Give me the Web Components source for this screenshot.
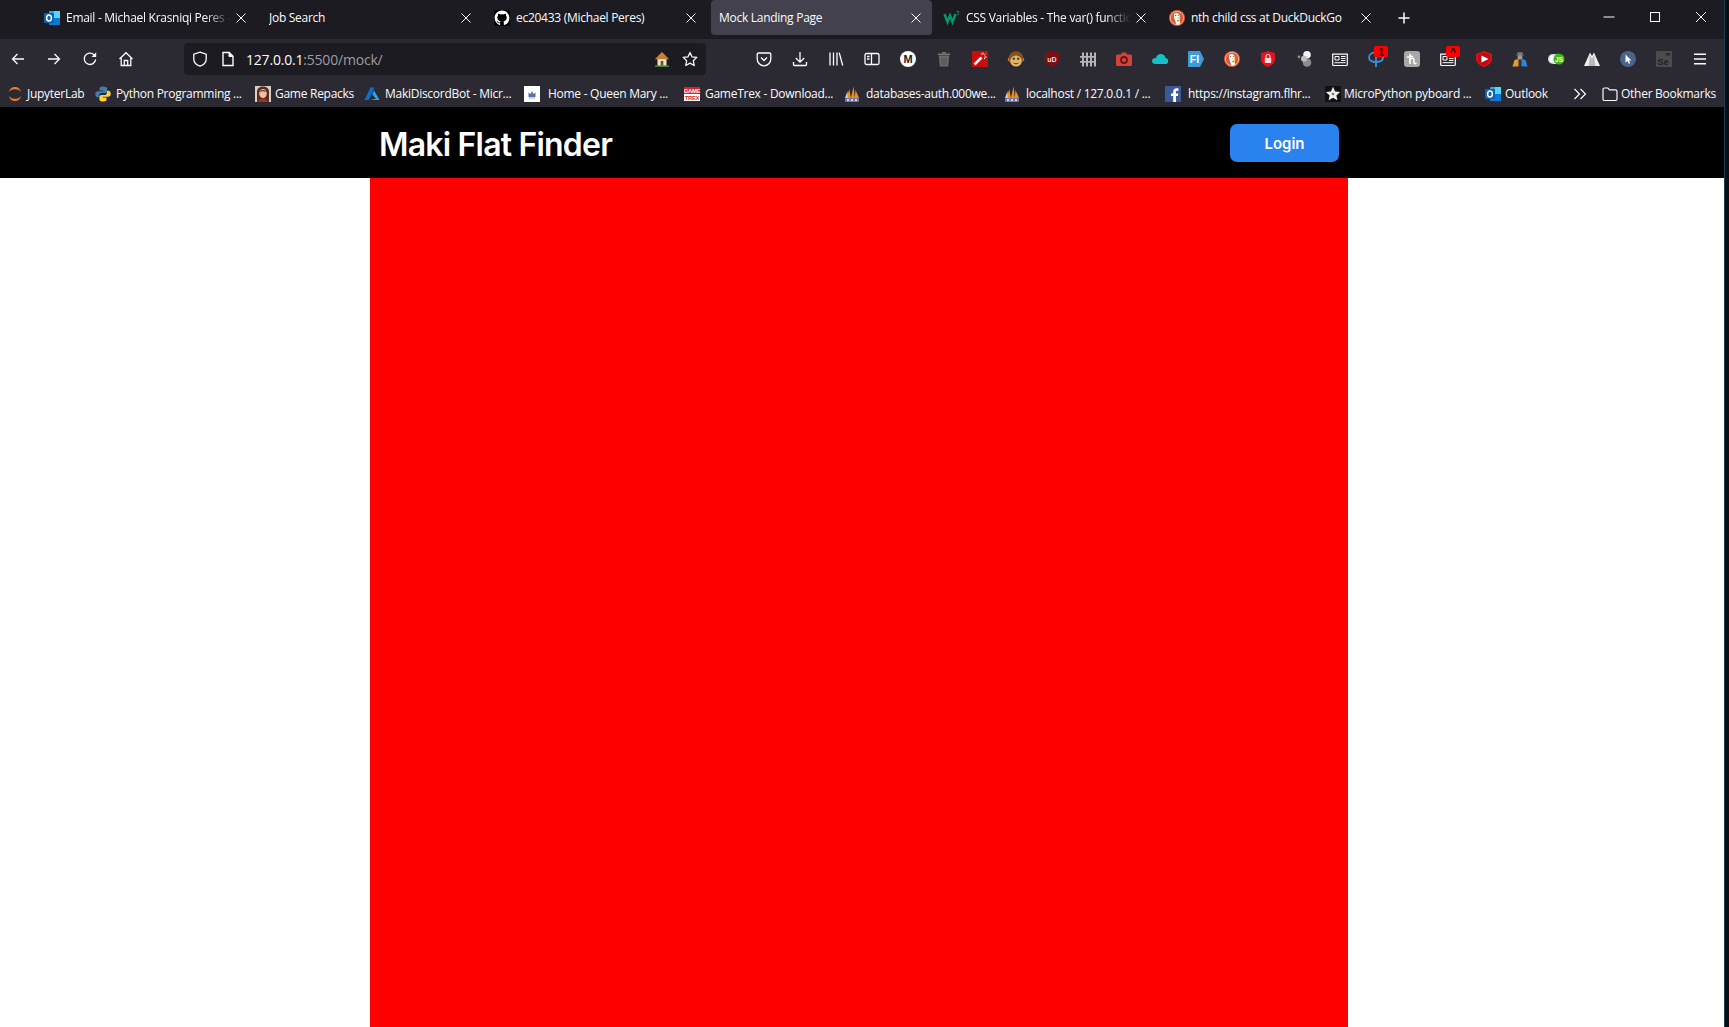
<!DOCTYPE html>
<html>
<head>
<meta charset="utf-8" />
<title>Mock Landing Page</title>
<style>
    html, body { margin: 0; height: 100%; overflow: hidden; background: #0a0e13; }
    body { font-family: "Open Sans", "Liberation Sans", sans-serif; }
</style>
</head>
<body>
<x-desktop>
    <x-strip>
        <x-tab icon="outlook" fade>Email - Michael Krasniqi Peres -</x-tab>
        <x-tab>Job Search</x-tab>
        <x-tab icon="github">ec20433 (Michael Peres)</x-tab>
        <x-tab active>Mock Landing Page</x-tab>
        <x-tab icon="w3" fade>CSS Variables - The var() function</x-tab>
        <x-tab icon="ddg">nth child css at DuckDuckGo</x-tab>
    </x-strip>
    <x-toolbar>
        <x-icon slot="nav" name="back" btn></x-icon>
        <x-icon slot="nav" name="forward" btn></x-icon>
        <x-icon slot="nav" name="reload" btn></x-icon>
        <x-icon slot="nav" name="home" btn></x-icon>
        <x-icon slot="tools" name="pocket" btn></x-icon>
        <x-icon slot="tools" name="download" btn></x-icon>
        <x-icon slot="tools" name="library" btn></x-icon>
        <x-icon slot="tools" name="sidebar" btn></x-icon>
        <x-icon slot="tools" name="mcircle" btn></x-icon>
        <x-icon slot="tools" name="trash" btn></x-icon>
        <x-icon slot="tools" name="wand" btn></x-icon>
        <x-icon slot="tools" name="monkey" btn></x-icon>
        <x-icon slot="tools" name="ublock" btn></x-icon>
        <x-icon slot="tools" name="fence" btn></x-icon>
        <x-icon slot="tools" name="camera" btn></x-icon>
        <x-icon slot="tools" name="cloud" btn></x-icon>
        <x-icon slot="tools" name="fi" btn></x-icon>
        <x-icon slot="tools" name="ddg" btn></x-icon>
        <x-icon slot="tools" name="lock" btn></x-icon>
        <x-icon slot="tools" name="balls" btn></x-icon>
        <x-icon slot="tools" name="news" btn></x-icon>
        <x-icon slot="tools" name="phi" btn badge="1"></x-icon>
        <x-icon slot="tools" name="hsquare" btn></x-icon>
        <x-icon slot="tools" name="news" btn badge="^"></x-icon>
        <x-icon slot="tools" name="yt" btn></x-icon>
        <x-icon slot="tools" name="spy" btn></x-icon>
        <x-icon slot="tools" name="js" btn></x-icon>
        <x-icon slot="tools" name="mountain" btn></x-icon>
        <x-icon slot="tools" name="cursor" btn></x-icon>
        <x-icon slot="tools" name="selenium" btn></x-icon>
        <x-icon slot="tools" name="menu" btn></x-icon>
    </x-toolbar>
    <x-bookmarks>
        <x-bookmark w="88" icon="jupyter" gap="4">JupyterLab</x-bookmark>
        <x-bookmark w="160" icon="python">Python Programming ...</x-bookmark>
        <x-bookmark w="109" icon="photo" gap="4">Game Repacks</x-bookmark>
        <x-bookmark w="160" icon="azure">MakiDiscordBot - Micr...</x-bookmark>
        <x-bookmark w="160" icon="qm" gap="8">Home - Queen Mary ...</x-bookmark>
        <x-bookmark w="160" icon="gametrex">GameTrex - Download...</x-bookmark>
        <x-bookmark w="160" icon="pma" gap="6">databases-auth.000we...</x-bookmark>
        <x-bookmark w="161" icon="pma" gap="6">localhost / 127.0.0.1 / ...</x-bookmark>
        <x-bookmark w="160" icon="fb" gap="7">https://instagram.flhr...</x-bookmark>
        <x-bookmark w="160" icon="micropython" gap="3">MicroPython pyboard ...</x-bookmark>
        <x-bookmark w="87" icon="outlook" gap="4">Outlook</x-bookmark>
        <x-icon name="chevrons"></x-icon>
        <x-bookmark w="114" icon="folder" gap="3" style="margin-left:14px">Other Bookmarks</x-bookmark>
    </x-bookmarks>
    <mock-page>
        <span slot="brand">Maki Flat Finder</span>
        <span slot="action">Login</span>
    </mock-page>
</x-desktop>

<script>
const ICONS = {
    back: '<path d="M14 8H2.500M7.500 3L2.500 8l5 5" fill="none" stroke="#fbfbfe" stroke-width="1.300"/>',
    forward: '<path d="M2 8h11.500M8.500 3l5 5-5 5" fill="none" stroke="#fbfbfe" stroke-width="1.300"/>',
    reload: '<path d="M13.600 8.400A5.700 5.700 0 1 1 11.900 3.700l1.700 1.600" fill="none" stroke="#fbfbfe" stroke-width="1.300"/><path d="M14.200 1.200v4.700H9.600z" fill="#fbfbfe"/>',
    home: '<path d="M1.500 8L8 1.700 14.500 8M3.200 6.600v7.900h9.600V6.600M6.300 14.500V9.500h3.400v5" fill="none" stroke="#fbfbfe" stroke-width="1.300"/>',
    shield: '<path d="M8 1.200L14.200 3.200V8C14.200 11.600 11.400 14 8 15.200 4.600 14 1.800 11.600 1.800 8V3.200Z" fill="none" stroke="#fbfbfe" stroke-width="1.300"/>',
    page: '<path d="M3 1.500h6.200L13 5.300v9.200H3z" fill="none" stroke="#fbfbfe" stroke-width="1.400"/><path d="M9 1.500V5.500H13" fill="#fbfbfe" stroke="#fbfbfe"/>',
    house: '<path d="M1 14.500h14v1.200H1z" fill="#5aa63a"/><path d="M3.500 7.500h9v7h-9z" fill="#eee3c8"/><path d="M8 1L.8 8.200h14.400z" fill="#c9822e"/><path d="M6.700 10h2.600v4.500H6.700z" fill="#7a4a1e"/>',
    star: '<path d="M8 1.400l2 4.400 4.800.6-3.500 3.300.9 4.800L8 12.100l-4.200 2.400.9-4.800L1.200 6.400 6 5.800z" fill="none" stroke="#fbfbfe" stroke-width="1.300" stroke-linejoin="round"/>',
    pocket: '<path d="M2.500 2h11c.8 0 1.300.5 1.300 1.300V8A6.800 6.800 0 0 1 1.200 8V3.300C1.200 2.500 1.700 2 2.500 2z" fill="none" stroke="#fbfbfe" stroke-width="1.300"/><path d="M5 6.500l3 3 3-3" fill="none" stroke="#fbfbfe" stroke-width="1.300"/>',
    download: '<path d="M8 1v10M3.800 7L8 11.200 12.200 7M1.500 11v2.500c0 .6.4 1 1 1h11c.6 0 1-.4 1-1V11" fill="none" stroke="#fbfbfe" stroke-width="1.300"/>',
    library: '<path d="M2 1.500v13M5.500 1.500v13M9 1.500v13M11.200 1.700l3.500 12.800" fill="none" stroke="#fbfbfe" stroke-width="1.300"/>',
    sidebar: '<rect x="1" y="2.500" width="14" height="11" rx="1.500" fill="none" stroke="#fbfbfe" stroke-width="1.300"/><path d="M7.500 2.500v11M3 5.500h2.500M3 8h2.500" fill="none" stroke="#fbfbfe" stroke-width="1.300"/>',
    mcircle: '<circle cx="8" cy="8" r="8" fill="#fff"/><text x="8" y="12" text-anchor="middle" font-family="Liberation Sans" font-weight="700" font-size="11" fill="#1c1b22">M</text>',
    trash: '<path d="M2 2.500h12v1.500H2z" fill="#777"/><path d="M6 1h4v1.500H6z" fill="#777"/><path d="M2.800 4.500h10.400l-1 11H3.800z" fill="#6a6a6a"/><path d="M6 6.500v7.500M8 6.500v7.500M10 6.500v7.500" stroke="#555"/>',
    wand: '<rect width="16" height="16" fill="#c80d0d"/><path d="M2.500 13.500l7-7" stroke="#fff" stroke-width="2.500"/><path d="M11 1.500v2M13.500 3l-1.300 1.300M14.500 6h-2M9 2.500l1 1.200M13 8l-1-1" stroke="#fff" stroke-width="1"/>',
    monkey: '<circle cx="1.800" cy="8.500" r="2" fill="#c98a3c"/><circle cx="14.200" cy="8.500" r="2" fill="#c98a3c"/><circle cx="8" cy="7.500" r="7.300" fill="#8a4f1d"/><ellipse cx="8" cy="10" rx="5.800" ry="5.600" fill="#e3b36b"/><circle cx="5.800" cy="7.800" r="1.300" fill="#3d5a2a"/><circle cx="10.200" cy="7.800" r="1.300" fill="#3d5a2a"/><path d="M5.500 12c1.500 1 3.500 1 5 0" stroke="#6b3a10" fill="none"/>',
    ublock: '<path d="M8 0L15 2V8.500C15 12 12 14.500 8 16 4 14.500 1 12 1 8.500V2Z" fill="#7b0f16"/><text x="8" y="10.500" text-anchor="middle" font-family="Liberation Sans" font-weight="700" font-size="7" fill="#f4dada">uD</text>',
    fence: '<path d="M2 1.500h2v14H2zM6 1.500h2v14H6zM10 1.500h2v14h-2zM14 1.500h2v14h-2zM0 5h16v1.800H0zM0 10h16v1.800H0z" fill="#b5b5b8"/>',
    camera: '<path d="M1.500 3.500H5L6 1.500h4l1 2h3.500c.8 0 1.500.7 1.500 1.500v8.500c0 .8-.7 1.500-1.500 1.500h-13C.7 15 0 14.300 0 13.500V5c0-.8.7-1.500 1.500-1.500z" fill="#d8403a"/><circle cx="8" cy="9" r="3" fill="none" stroke="#5c1a18" stroke-width="1.800"/>',
    cloud: '<path d="M3.500 13h9.500a3 3 0 0 0 .4-6A4.500 4.500 0 0 0 8.500 3 5 5 0 0 0 4 7.200 3 3 0 0 0 0 10c0 1.800 1.500 3 3.500 3z" fill="#17bfc6"/>',
    fi: '<path d="M1 0h11l4 8-4 8H1c-.6 0-1-.4-1-1V1c0-.6.4-1 1-1z" fill="#3d9bdc"/><text x="6.500" y="12" text-anchor="middle" font-family="Liberation Sans" font-weight="700" font-size="10.500" fill="#fff">FI</text>',
    ddg: '<circle cx="8" cy="8" r="8" fill="#de5833"/><circle cx="8" cy="8" r="6.600" fill="none" stroke="#f5c9b8" stroke-width=".8"/><path d="M5.500 3.500c2-1.200 4.500-.6 5 1.500.4 1.700 0 3 .3 4.500.3 1.700.2 3.500-.3 5H7.500C6.500 12 5 8 5 6.500c0-1.300 0-2.300.5-3z" fill="#fff"/><path d="M7.500 7.800c1-.7 2.800-.4 3.800-.7.500.2.300.9-.2 1-.9.300-2.600.700-3.600.200z" fill="#fdd20a"/><path d="M8 10l2.500-.6v1.800L8 11.200z" fill="#65bc46"/><circle cx="9.300" cy="5.300" r=".6" fill="#2d4f8e"/><circle cx="6.600" cy="5.600" r=".6" fill="#2d4f8e"/>',
    lock: '<path d="M8 0L15 2V8.500C15 12 12 14.500 8 16 4 14.500 1 12 1 8.500V2Z" fill="#e8101c"/><rect x="4.800" y="7" width="6.400" height="5" rx=".6" fill="#ffd9d9"/><path d="M6 7V5.500a2 2 0 0 1 4 0V7" fill="none" stroke="#ffd9d9" stroke-width="1.200"/>',
    balls: '<circle cx="11" cy="3.800" r="3.800" fill="#f2f2f2"/><circle cx="3" cy="6.500" r="3" fill="#333"/><circle cx="3" cy="5.800" r="1.200" fill="#999"/><circle cx="11" cy="11.500" r="4.300" fill="#8c8c8c"/><circle cx="8" cy="7.800" r="3" fill="#bdbdbd"/>',
    news: '<path d="M.7 3.200h14.600v10.300c0 .6-.4 1-1 1H1.700c-.6 0-1-.4-1-1z" fill="none" stroke="#fbfbfe" stroke-width="1.200"/><path d="M3 5.500h4v3.500H3z" fill="none" stroke="#fbfbfe"/><path d="M9 5.500h4.500M9 7.500h4.500M9 9.500h4.500M2.500 11.700h11" stroke="#fbfbfe"/>',
    phi: '<path d="M8 1v15" stroke="#3b8edc" stroke-width="1.800"/><path d="M8 11C4 11 1 9.500 1 6.500S4 1.500 6.500 1.500M8 11c4 0 7-1.500 7-4.500S12 1.500 9.500 1.500" fill="none" stroke="#3b8edc" stroke-width="1.800"/>',
    hsquare: '<rect width="16" height="16" rx="3" fill="#a8a8a8"/><path d="M6 3v10M2.800 6.200l6.200-1M6 8.500c2-2 4-1.500 4 .5v2.500c0 1 1 1.500 2.500.8" fill="none" stroke="#fff" stroke-width="1.500"/>',
    yt: '<path d="M8 0L16 3V8C16 12 12 14.500 8 16 4 14.500 0 12 0 8V3Z" fill="#e10d14"/><path d="M8 1.800L14 4V8C14 10.800 11 12.800 8 14 5 12.800 2 10.800 2 8V4Z" fill="#b90c11"/><path d="M5.500 4.500l7 3.500-7 3.500z" fill="#fff"/>',
    spy: '<path d="M5 3.500L6 .8l2 .7 2-.7 1 2.700 1.500 1h-9z" fill="#7a7a7a"/><circle cx="8" cy="6.500" r="2.500" fill="#9a9a9a"/><path d="M.5 15.500L2.500 9l4-1v7.500z" fill="#e8992e"/><path d="M15.500 15.500L13.500 9l-4-1v7.500z" fill="#2f86d8"/><path d="M7 8.500h2v7H7z" fill="#333"/>',
    js: '<rect y="3" width="14" height="10" rx="5" fill="#d9d9d9"/><circle cx="5" cy="8" r="3.500" fill="#fff"/><circle cx="11" cy="8" r="5.500" fill="#3fb618"/><text x="11" y="10.500" text-anchor="middle" font-family="Liberation Sans" font-weight="700" font-size="6.500" fill="#fff">JS</text>',
    mountain: '<path d="M0 15L6 1.500 8 5 10 1.500 16 15z" fill="#eee"/><path d="M6 4L4.500 15h7L10 4 8 8z" fill="#bbb"/>',
    cursor: '<circle cx="8" cy="8" r="8" fill="#48648c"/><path d="M5.500 3.500v8l2-1.600 1.300 2.900 1.400-.6-1.300-2.800H11.500z" fill="#fff"/>',
    selenium: '<rect width="16" height="16" fill="#4b4b4b"/><text x="7" y="13.500" text-anchor="middle" font-family="Liberation Sans" font-weight="700" font-size="9" fill="#222">Se</text><rect x="10" y="2" width="4" height="2.500" fill="#2a2a2a"/>',
    menu: '<path d="M2 3.200h12M2 8h12M2 12.800h12" stroke="#fbfbfe" stroke-width="1.500"/>',
    chevrons: '<path d="M2.500 3l5 5-5 5M8.500 3l5 5-5 5" fill="none" stroke="#fbfbfe" stroke-width="1.200"/>',
    folder: '<path d="M1 3.500c0-.8.6-1.500 1.400-1.500h3.400l1.800 1.800h6c.8 0 1.400.6 1.400 1.400v7.800c0 .8-.6 1.500-1.400 1.500H2.400C1.600 14.500 1 13.800 1 13z" fill="none" stroke="#fbfbfe" stroke-width="1.200"/>',
    outlook: '<rect x="5" y="1" width="11" height="14" rx="1" fill="#28a8ea"/><rect x="10" y="1" width="6" height="7" fill="#50d9ff"/><rect x="5" y="8" width="11" height="7" fill="#0f78d4"/><rect y="3" width="10" height="10" rx="1" fill="#0f5fb5"/><ellipse cx="5" cy="8" rx="2.400" ry="3" fill="none" stroke="#fff" stroke-width="1.500"/>',
    github: '<rect width="16" height="16" rx="3" fill="#000"/><path transform="translate(.6 .6) scale(.925)" d="M8 0C3.580 0 0 3.580 0 8c0 3.540 2.290 6.530 5.470 7.590.4.070.55-.17.55-.38 0-.19-.01-.82-.01-1.490-2.010.37-2.530-.49-2.690-.94-.09-.23-.48-.94-.82-1.130-.28-.15-.68-.52-.01-.53.63-.01 1.080.58 1.230.82.72 1.210 1.870.87 2.330.66.07-.52.28-.87.51-1.070-1.780-.2-3.640-.89-3.640-3.950 0-.87.31-1.590.82-2.150-.08-.2-.36-1.020.08-2.120 0 0 .67-.21 2.200.82.64-.18 1.320-.27 2-.27s1.360.09 2 .27c1.530-1.040 2.200-.82 2.200-.82.44 1.100.16 1.920.08 2.120.51.56.82 1.270.82 2.150 0 3.070-1.870 3.750-3.650 3.950.29.25.54.73.54 1.480 0 1.070-.01 1.930-.01 2.200 0 .21.15.46.55.38A8.013 8.013 0 0016 8c0-4.420-3.580-8-8-8z" fill="#fff"/>',
    w3: '<path d="M.5 4l3 8 2.500-6.500L8.500 12l3-8" fill="none" stroke="#04966a" stroke-width="2.400"/><path d="M12.500 1.500h2.500l-1.200 1.300c1.500.4 1 2.500-1.300 2" fill="none" stroke="#04966a" stroke-width=".9"/>',
    jupyter: '<path d="M1.800 6C3 2.300 5.500 1 8 1s5 1.300 6.200 5C12.500 3.800 10.300 3.200 8 3.200S3.500 3.800 1.800 6zM1.800 10C3 13.700 5.500 15 8 15s5-1.300 6.200-5C12.500 12.200 10.300 12.800 8 12.800S3.500 12.200 1.800 10z" fill="#f37726"/>',
    python: '<path d="M8 .5c-3 0-3.500 1-3.500 2.300V4.500H8.200v.7H2.800C1.300 5.200.3 6.300.3 8.200s1 3 2.300 3h1.500V9.300c0-1.300 1.100-2.400 2.500-2.400h3.500c1.100 0 2-.9 2-2V2.800C12.100 1.300 10.800.5 8 .5z" fill="#3f7cb0"/><path d="M8 15.500c3 0 3.500-1 3.500-2.300v-1.700H7.800v-.7h5.400c1.500 0 2.500-1.100 2.500-3s-1-3-2.300-3h-1.500v1.900c0 1.300-1.100 2.400-2.500 2.400H6.400c-1.100 0-2 .9-2 2v2.100c0 1.500 1.300 2.300 3.600 2.300z" fill="#ffd43b"/>',
    photo: '<rect width="16" height="16" fill="#d8cfc6"/><path d="M2 16V6c0-4 3-5.500 6-5.500S14 2 14 6v10z" fill="#5c2a1e"/><ellipse cx="8" cy="7.500" rx="3.800" ry="4.500" fill="#eebfa0"/><path d="M3 16c.5-3 3-3.500 5-3.500s4.500.5 5 3.500z" fill="#a2302a"/><path d="M4 6c1-2.500 7-2.500 8 0-2-1-6-1-8 0z" fill="#3d1a12"/>',
    azure: '<path d="M6.500 1.500h4L4.800 14H.5z" fill="#0a6fd0"/><path d="M10 4.500l5.500 9.500H6l6-1.200-3.700-4.500z" fill="#2ba5ef"/>',
    qm: '<rect width="16" height="16" fill="#fff"/><path d="M4.500 11V6.500l2 1.500L8 5l1.500 3 2-1.500V11z" fill="#5c6fa8"/><path d="M5 11.500h6v1H5z" fill="#9aa6c8"/>',
    gametrex: '<rect width="16" height="7" y="1" fill="#d4242a"/><rect width="16" height="7" y="8" fill="#fff"/><text x="8" y="6.800" text-anchor="middle" font-family="Liberation Sans" font-weight="700" font-size="5.800" fill="#fff">GAME</text><text x="8" y="13.800" text-anchor="middle" font-family="Liberation Sans" font-weight="700" font-size="5.800" fill="#d4242a">TREX</text>',
    pma: '<path d="M2.500 12L5.300 3 7 12zM7 12L9.500 .5 10.800 12zM10.800 12L11.500 4 15 12z" fill="#f29111"/><path d="M1 12L3.500 5 4 12z" fill="#c9c9c9"/><rect x="1" y="12" width="14" height="4" rx="1" fill="#6c78af"/><path d="M3 13h2v2H3zM7 13h2v2H7zM11 13h2v2h-2z" fill="#cdd2e6"/>',
    fb: '<rect width="16" height="16" fill="#3b5998"/><path d="M11 16V10h2l.4-2.500H11V6c0-.8.3-1.300 1.300-1.300h1.200V2.500c-.5-.1-1.200-.2-2-.2-2 0-3.300 1.200-3.300 3.400v1.800H6V10h2.200v6z" fill="#fff"/>',
    micropython: '<rect width="16" height="16" fill="#111"/><path d="M8 .8l2.100 4.600 5 .6-3.700 3.400 1 4.900L8 11.800l-4.400 2.500 1-4.900L.9 6l5-.6z" fill="#eee"/><circle cx="8" cy="8" r="1.300" fill="#777"/>'
};

class XDesktop extends HTMLElement {
    constructor () {
        super();
        this.attachShadow({mode: 'open'});
        this.shadowRoot.innerHTML = `
            <style>
                :host { display: flex; height: 100vh; overflow: hidden; }
                .window { width: 1724px; flex: none; display: flex; flex-direction: column; background: #fff; overflow: hidden; }
                .edge { flex: 1; background: #0a0e13; border-left: 1px solid #1e3c50; }
            </style>
            <div class="window"><slot></slot></div>
            <div class="edge"></div>`;
    }
}

class XStrip extends HTMLElement {
    constructor () {
        super();
        this.attachShadow({mode: 'open'});
        this.shadowRoot.innerHTML = `
            <style>
                :host { display: flex; height: 39px; padding-left: 34px; background: #1c1b22; flex: none; align-items: flex-start; }
                .plus { width: 40px; height: 35px; display: flex; align-items: center; justify-content: center; }
                .win { margin-left: auto; display: flex; }
                .win div { width: 46px; height: 34px; display: flex; align-items: center; justify-content: center; }
                svg { width: 16px; height: 16px; display: block; }
            </style>
            <slot></slot>
            <div class="plus"><svg viewBox="0 0 16 16"><path d="M8 2.500v11M2.500 8h11" stroke="#fbfbfe" stroke-width="1.500"/></svg></div>
            <div class="win">
                <div><svg viewBox="0 0 16 16"><path d="M2.500 8h11" stroke="#fbfbfe"/></svg></div>
                <div><svg viewBox="0 0 16 16"><rect x="3.500" y="3.500" width="9" height="9" fill="none" stroke="#fbfbfe"/></svg></div>
                <div><svg viewBox="0 0 16 16"><path d="M3 3l10 10M13 3L3 13" stroke="#fbfbfe"/></svg></div>
            </div>`;
    }
}

class XTab extends HTMLElement {
    constructor () {
        super();
        const icon = this.getAttribute('icon');
        this.attachShadow({mode: 'open'});
        this.shadowRoot.innerHTML = `
            <style>
                :host { display: flex; align-items: center; flex: none; width: 221px; height: 35px; margin: 0 2px; padding: 0 6px 0 8px; box-sizing: border-box; border-radius: 4px; color: #fbfbfe; font-size: 12px; letter-spacing: -0.28px; }
                :host([active]) { background: #42414d; }
                x-icon { margin-right: 6px; }
                .title { flex: 1; min-width: 0; white-space: nowrap; overflow: hidden; }
                :host([fade]) .title { -webkit-mask-image: linear-gradient(to right, #000 calc(100% - 26px), transparent); mask-image: linear-gradient(to right, #000 calc(100% - 26px), transparent); }
                svg { width: 20px; height: 20px; display: block; flex: none; }
            </style>
            ${icon ? `<x-icon name="${icon}"></x-icon>` : ''}
            <div class="title"><slot></slot></div>
            <svg viewBox="0 0 20 20"><path d="M5.500 5.500l9 9M14.500 5.500l-9 9" stroke="#fbfbfe" stroke-width="1"/></svg>`;
    }
}

class XIcon extends HTMLElement {
    constructor () {
        super();
        const name = this.getAttribute('name');
        const badge = this.getAttribute('badge');
        this.attachShadow({mode: 'open'});
        this.shadowRoot.innerHTML = `
            <style>
                :host { display: flex; align-items: center; justify-content: center; flex: none; width: 16px; height: 16px; position: relative; }
                :host([btn]) { width: 36px; height: 32px; }
                svg { width: 16px; height: 16px; display: block; overflow: visible; }
                .badge { position: absolute; top: 3px; left: 16px; width: 14px; height: 11px; border-radius: 2px; background: #f00; color: #000; font: 700 11px/12px "Liberation Sans", sans-serif; text-align: center; }
            </style>
            <svg viewBox="0 0 16 16">${ICONS[name] || ''}</svg>
            ${badge ? `<div class="badge">${badge}</div>` : ''}`;
    }
}

class XToolbar extends HTMLElement {
    constructor () {
        super();
        this.attachShadow({mode: 'open'});
        this.shadowRoot.innerHTML = `
            <style>
                :host { display: flex; align-items: center; height: 38px; flex: none; background: #2b2a33; padding-top: 2px; box-sizing: border-box; }
                .group { display: flex; }
                .url { display: flex; align-items: center; width: 522px; height: 32px; margin: 0 40px; padding: 0 8px; box-sizing: border-box; background: #1c1b22; border-radius: 4px; font-size: 14px; letter-spacing: -0.2px; color: #fbfbfe; }
                .url x-icon { margin-right: 12px; }
                .addr { flex: 1; margin-left: -2px; }
                .addr span { color: #9c9ca3; }
                .url .end { margin: 0 0 0 12px; }
                .url .house { margin: 0; }
            </style>
            <div class="group"><slot name="nav"></slot></div>
            <div class="url">
                <x-icon name="shield"></x-icon>
                <x-icon name="page"></x-icon>
                <div class="addr">127.0.0.1<span>:5500/mock/</span></div>
                <x-icon class="house" name="house"></x-icon>
                <x-icon class="end" name="star"></x-icon>
            </div>
            <div class="group"><slot name="tools"></slot></div>`;
    }
}

class XBookmarks extends HTMLElement {
    constructor () {
        super();
        this.attachShadow({mode: 'open'});
        this.shadowRoot.innerHTML = `
            <style>
                :host { display: flex; align-items: center; height: 30px; flex: none; background: #2b2a33; padding: 3px 0 0 7px; box-sizing: border-box; }
            </style>
            <slot></slot>`;
    }
}

class XBookmark extends HTMLElement {
    constructor () {
        super();
        const icon = this.getAttribute('icon');
        const gap = this.getAttribute('gap') || 5;
        this.attachShadow({mode: 'open'});
        this.shadowRoot.innerHTML = `
            <style>
                :host { display: flex; align-items: center; flex: none; width: ${this.getAttribute('w')}px; gap: ${gap}px; color: #fbfbfe; font-size: 12px; letter-spacing: -0.27px; white-space: nowrap; overflow: hidden; }
            </style>
            <x-icon name="${icon}"></x-icon>
            <slot></slot>`;
    }
}

class MockPage extends HTMLElement {
    constructor () {
        super();
        this.attachShadow({mode: 'open'});
        this.shadowRoot.innerHTML = `
            <style>
                :host { display: flex; flex-direction: column; flex: 1; min-height: 0; background: #fff; font-family: Inter, "Liberation Sans", sans-serif; }
                nav { flex: none; height: 71px; background: #000; }
                .wrap { width: 978px; height: 100%; margin-left: 370px; padding: 0 9px; box-sizing: border-box; display: flex; align-items: center; justify-content: space-between; }
                .brand { color: #fff; font-size: 32px; font-weight: 600; letter-spacing: -0.8px; margin-top: 4px; }
                .login { display: flex; align-items: center; justify-content: center; width: 109px; height: 38px; margin-top: 1px; border-radius: 7px; background: #2a82ee; color: #fff; font-size: 15px; font-weight: 600; }
                main { flex: 1; width: 978px; margin-left: 370px; background: #f00; }
            </style>
            <nav><div class="wrap">
                <div class="brand"><slot name="brand"></slot></div>
                <div class="login"><slot name="action"></slot></div>
            </div></nav>
            <main></main>`;
    }
}

customElements.define('x-icon', XIcon);
customElements.define('x-desktop', XDesktop);
customElements.define('x-strip', XStrip);
customElements.define('x-tab', XTab);
customElements.define('x-toolbar', XToolbar);
customElements.define('x-bookmarks', XBookmarks);
customElements.define('x-bookmark', XBookmark);
customElements.define('mock-page', MockPage);
</script>
</body>
</html>
